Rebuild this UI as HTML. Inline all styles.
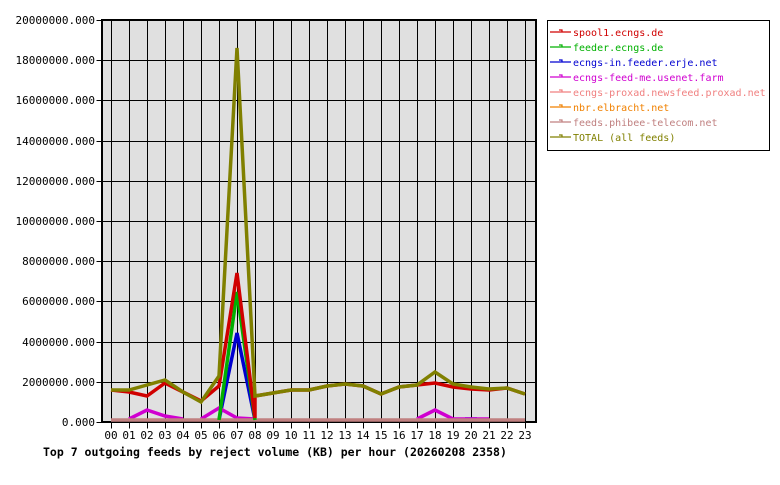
<!DOCTYPE html>
<html><head><meta charset="utf-8"><style>
html,body{margin:0;padding:0;background:#fff;}
svg text{font-family:"DejaVu Sans Mono","Liberation Mono",monospace;}
</style></head><body>
<svg width="780" height="480" xmlns="http://www.w3.org/2000/svg">
<rect x="102" y="20" width="434" height="402" fill="#e0e0e0"/>
<g stroke="#000" stroke-width="1" fill="none" transform="translate(0.5,0.5)">
<path d="M111 20V422M129 20V422M147 20V422M165 20V422M183 20V422M201 20V422M219 20V422M237 20V422M255 20V422M273 20V422M291 20V422M309 20V422M327 20V422M345 20V422M363 20V422M381 20V422M399 20V422M417 20V422M435 20V422M453 20V422M471 20V422M489 20V422M507 20V422M525 20V422"/>
<path d="M102 60H536M102 100H536M102 141H536M102 181H536M102 221H536M102 261H536M102 301H536M102 342H536M102 382H536"/>
<path d="M111 422V428M129 422V428M147 422V428M165 422V428M183 422V428M201 422V428M219 422V428M237 422V428M255 422V428M273 422V428M291 422V428M309 422V428M327 422V428M345 422V428M363 422V428M381 422V428M399 422V428M417 422V428M435 422V428M453 422V428M471 422V428M489 422V428M507 422V428M525 422V428"/>
<path d="M96 20H102M96 60H102M96 100H102M96 141H102M96 181H102M96 221H102M96 261H102M96 301H102M96 342H102M96 382H102M96 422H102"/>
</g>
<rect x="102" y="20" width="434" height="402" fill="none" stroke="#000" stroke-width="2"/>
<g fill="none" stroke-width="3.5" stroke-linejoin="miter">
<polyline stroke="#0000d0" points="219,420 237,333 255,420"/>
<polyline stroke="#0000d0" points="465,419 477,419"/>
<polyline stroke="#d000d0" points="129,419 147,410 165,416 183,419"/>
<polyline stroke="#d000d0" points="201,419 219,408 237,418 255,419"/>
<polyline stroke="#d000d0" points="417,419 435,410 453,419 471,419 489,419"/>
<polyline stroke="#c08080" points="111,420 525,420"/>
<polyline stroke="#00b000" points="219,420 237,292 255,420"/>
<polyline stroke="#d00000" points="111,390 129,392 147,396 165,383 183,392 201,401 219,386 237,273 255,418 255,396 273,393 291,390 309,390 327,386 345,384 363,386 381,394 399,387 417,385 435,383 453,387 471,389 489,390 507,388 525,394"/>
<polyline stroke="#808000" points="111,390 129,390 147,385 165,380 183,392 201,402 219,376 237,48 255,396 273,393 291,390 309,390 327,386 345,384 363,386 381,394 399,387 417,385 435,372 453,384 471,387 489,389 507,388 525,394"/>
</g>
<g font-size="11" text-anchor="end" fill="#000">
<text x="95" y="24">20000000.000</text><text x="95" y="64">18000000.000</text><text x="95" y="104">16000000.000</text><text x="95" y="145">14000000.000</text><text x="95" y="185">12000000.000</text><text x="95" y="225">10000000.000</text><text x="95" y="265">8000000.000</text><text x="95" y="305">6000000.000</text><text x="95" y="346">4000000.000</text><text x="95" y="386">2000000.000</text><text x="95" y="426">0.000</text>
</g>
<g font-size="11" text-anchor="middle" fill="#000">
<text x="111" y="439">00</text><text x="129" y="439">01</text><text x="147" y="439">02</text><text x="165" y="439">03</text><text x="183" y="439">04</text><text x="201" y="439">05</text><text x="219" y="439">06</text><text x="237" y="439">07</text><text x="255" y="439">08</text><text x="273" y="439">09</text><text x="291" y="439">10</text><text x="309" y="439">11</text><text x="327" y="439">12</text><text x="345" y="439">13</text><text x="363" y="439">14</text><text x="381" y="439">15</text><text x="399" y="439">16</text><text x="417" y="439">17</text><text x="435" y="439">18</text><text x="453" y="439">19</text><text x="471" y="439">20</text><text x="489" y="439">21</text><text x="507" y="439">22</text><text x="525" y="439">23</text>
</g>
<text x="43" y="456" font-size="11.5" font-weight="bold" fill="#000">Top 7 outgoing feeds by reject volume (KB) per hour (20260208 2358)</text>
<rect x="547.5" y="20.5" width="222" height="130" fill="#fff" stroke="#000" stroke-width="1"/>
<g font-size="10">
<g stroke-width="1.2" fill="none">
<path d="M550 32H571M559 30h3v2" stroke="#d00000"/>
<path d="M550 47H571M559 45h3v2" stroke="#00b000"/>
<path d="M550 62H571M559 60h3v2" stroke="#0000d0"/>
<path d="M550 77H571M559 75h3v2" stroke="#d000d0"/>
<path d="M550 92H571M559 90h3v2" stroke="#f08080"/>
<path d="M550 107H571M559 105h3v2" stroke="#f08000"/>
<path d="M550 122H571M559 120h3v2" stroke="#c08080"/>
<path d="M550 137H571M559 135h3v2" stroke="#808000"/>
</g>
<text x="573" y="36" fill="#d00000">spool1.ecngs.de</text>
<text x="573" y="51" fill="#00b000">feeder.ecngs.de</text>
<text x="573" y="66" fill="#0000d0">ecngs-in.feeder.erje.net</text>
<text x="573" y="81" fill="#d000d0">ecngs-feed-me.usenet.farm</text>
<text x="573" y="96" fill="#f08080">ecngs-proxad.newsfeed.proxad.net</text>
<text x="573" y="111" fill="#f08000">nbr.elbracht.net</text>
<text x="573" y="126" fill="#c08080">feeds.phibee-telecom.net</text>
<text x="573" y="141" fill="#808000">TOTAL (all feeds)</text>
</g>
</svg>
</body></html>
